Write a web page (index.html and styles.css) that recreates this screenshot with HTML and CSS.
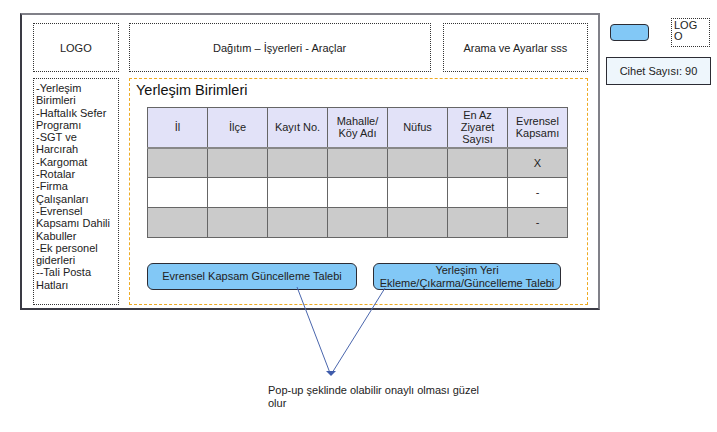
FILE: index.html
```html
<!DOCTYPE html>
<html lang="tr">

<head>
    <meta charset="utf-8">
    <meta name="viewport" content="width=device-width, initial-scale=1.0">
    <title>Yerleşim Birimleri</title>
    <link rel="stylesheet" href="styles.css">
</head>

<body>
    <div class="page">
        <section class="frame">
            <header class="top">
                <div class="box logo">LOGO</div>
                <div class="box title">Dağıtım – İşyerleri - Araçlar</div>
                <div class="box search">Arama ve Ayarlar sss</div>
            </header>

            <div class="content">
                <nav class="box menu">
                    -Yerleşim Birimleri<br>
                    -Haftalık Sefer Programı<br>
                    -SGT ve Harcırah<br>
                    -Kargomat<br>
                    -Rotalar<br>
                    -Firma Çalışanları<br>
                    -Evrensel Kapsamı Dahili Kabuller<br>
                    -Ek personel giderleri<br>
                    --Tali Posta Hatları
                </nav>

                <main class="panel">
                    <h1>Yerleşim Birimleri</h1>
                    <table class="grid">
                        <thead>
                            <tr>
                                <th>İl</th>
                                <th>İlçe</th>
                                <th>Kayıt No.</th>
                                <th>Mahalle/<br>Köy Adı</th>
                                <th>Nüfus</th>
                                <th>En Az<br>Ziyaret<br>Sayısı</th>
                                <th>Evrensel<br>Kapsamı</th>
                            </tr>
                        </thead>
                        <tbody>
                            <tr class="gri">
                                <td></td><td></td><td></td><td></td><td></td><td></td><td>X</td>
                            </tr>
                            <tr>
                                <td></td><td></td><td></td><td></td><td></td><td></td><td>-</td>
                            </tr>
                            <tr class="gri">
                                <td></td><td></td><td></td><td></td><td></td><td></td><td>-</td>
                            </tr>
                        </tbody>
                    </table>

                    <div class="actions">
                        <button class="btn wide">Evrensel Kapsam Güncelleme Talebi</button>
                        <button class="btn">Yerleşim Yeri<br>Ekleme/Çıkarma/Güncelleme Talebi</button>
                    </div>
                </main>
            </div>
        </section>

        <aside class="side">
            <div class="side-top">
                <span class="pill"></span>
                <div class="mini-logo">LOGO</div>
            </div>
            <div class="cihet">Cihet Sayısı: 90</div>
        </aside>
    </div>

    <p class="note">Pop-up şeklinde olabilir onaylı olması güzel olur</p>

    <svg class="arrows" width="717" height="432" viewBox="0 0 717 432">
        <line x1="297" y1="287" x2="330" y2="373" />
        <line x1="385" y1="288" x2="332" y2="373" />
        <polygon points="326,371 336,371 331,376" />
    </svg>
</body>

</html>
```

FILE: styles.css
```css
* {
    box-sizing: border-box;
}

body {
    margin: 13px 0 0 20px;
    font-family: "Liberation Sans", Arial, sans-serif;
    font-size: 11px;
    color: #222;
    background: #fff;
}

.page {
    display: flex;
    align-items: flex-start;
}

.frame {
    width: 580px;
    height: 297px;
    border: 2px solid #3a3a44;
    border-top-color: #808088;
    border-right-color: #808088;
    padding: 8px 10px 3px 11px;
    display: flex;
    flex-direction: column;
    gap: 6px;
}

.top {
    display: flex;
    justify-content: space-between;
    height: 49px;
}

.box {
    border: 1px dotted #333;
    display: flex;
    align-items: center;
    justify-content: center;
}

.logo {
    width: 86px;
}

.title {
    width: 303px;
    margin-left: 10px;
}

.search {
    width: 146px;
    margin-left: 12px;
}

.content {
    display: grid;
    grid-template-columns: 86px 1fr;
    column-gap: 10px;
    height: 227px;
}

.menu {
    display: block;
    padding: 3px 2px;
    line-height: 12.3px;
}

.panel {
    border: 1px dashed #eeaa22;
    padding: 2px 6px 0;
}

h1 {
    margin: 0 0 8px;
    font-size: 14.5px;
    font-weight: normal;
    line-height: 18px;
    color: #111;
}

.grid {
    margin-left: 11px;
    width: 421px;
    table-layout: fixed;
    border-collapse: collapse;
    border: 1px solid #666;
}

.grid th,
.grid td {
    border: 1px solid #666;
    text-align: center;
    font-weight: normal;
    padding: 0;
    line-height: 12.3px;
}

.grid th {
    height: 40px;
    background: #e2e2f8;
    border-bottom: 2px solid #888;
}

.grid td {
    height: 30px;
}

.grid .gri td {
    background: #cbcbcb;
}

.actions {
    display: flex;
    gap: 16px;
    margin: 25px 0 0 11px;
}

.btn {
    height: 27px;
    width: 188px;
    padding: 0;
    background: #82c8f6;
    border: 1px solid #2c2c34;
    border-radius: 6px;
    font-family: inherit;
    font-size: 11px;
    line-height: 12.3px;
    color: #222;
}

.btn.wide {
    width: 210px;
}

.side {
    margin-left: 6px;
    width: 105px;
}

.side-top {
    display: flex;
    align-items: flex-start;
    height: 44px;
}

.pill {
    width: 39px;
    height: 17px;
    margin: 11px 0 0 4px;
    background: #82c8f6;
    border: 1px solid #2c2c34;
    border-radius: 4px;
}

.mini-logo {
    width: 39px;
    height: 29px;
    margin: 5px 0 0 22px;
    border: 1px dotted #333;
    padding: 1px 6px 0 2px;
    line-height: 11px;
    font-size: 11px;
    word-break: break-all;
}

.cihet {
    height: 28px;
    border: 1px solid #2c2c34;
    background: #eef6fc;
    display: flex;
    align-items: center;
    justify-content: center;
}

.note {
    margin: 74px 0 0 248px;
    width: 215px;
    line-height: 12.5px;
}

.arrows {
    position: absolute;
    left: 0;
    top: 0;
    pointer-events: none;
}

.arrows line {
    stroke: #4a66ad;
    stroke-width: 1;
}

.arrows polygon {
    fill: #3f5cab;
}
```
